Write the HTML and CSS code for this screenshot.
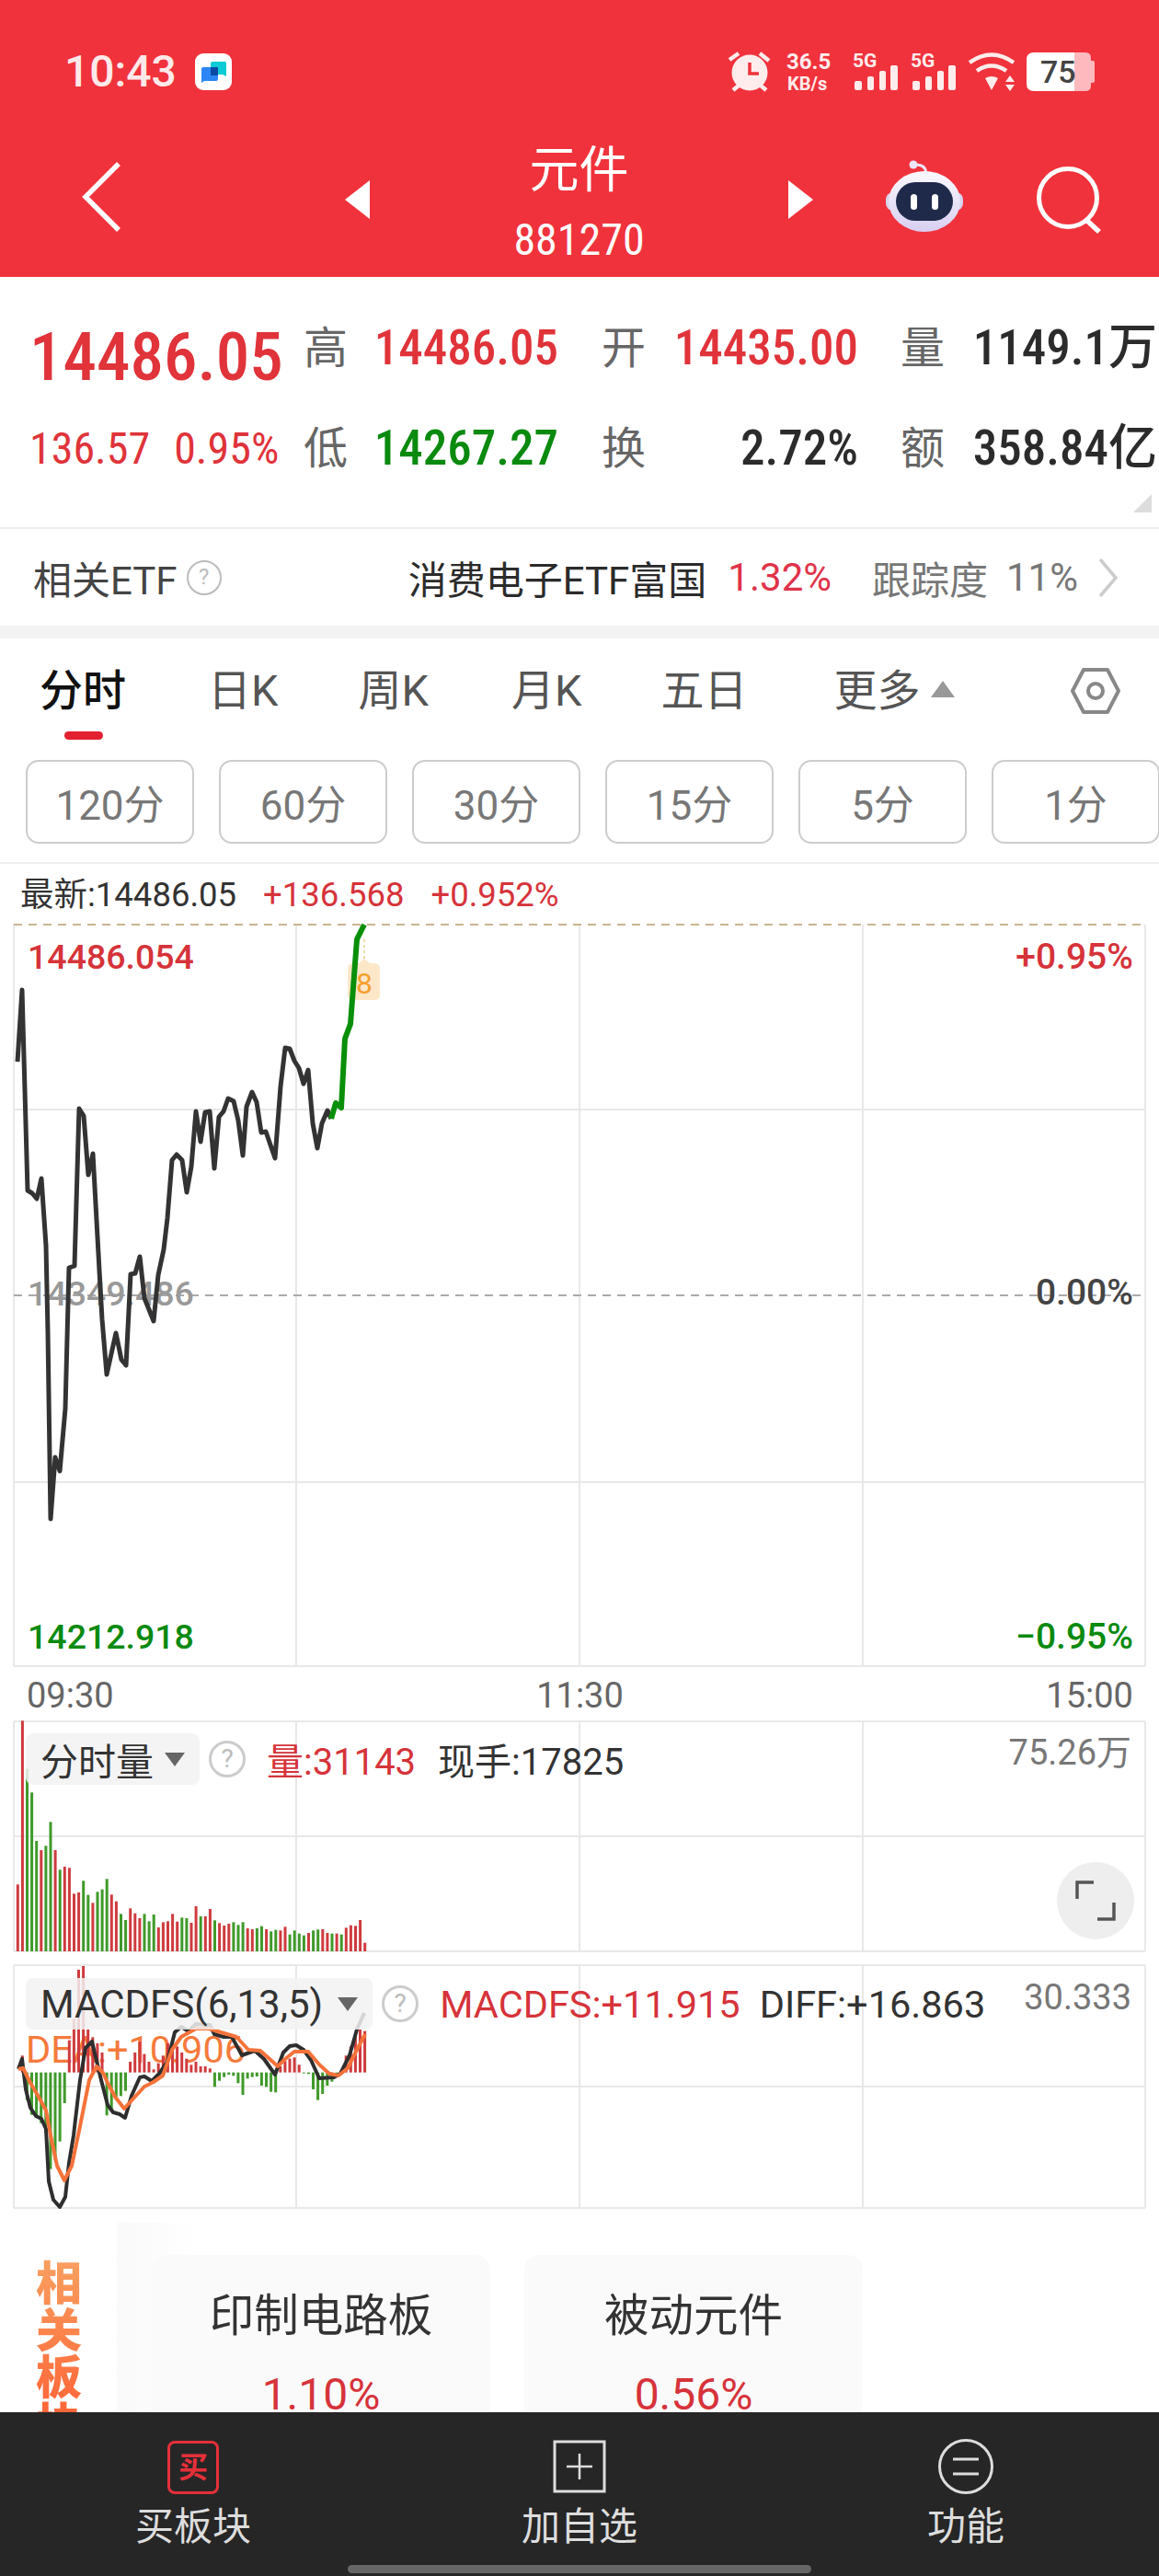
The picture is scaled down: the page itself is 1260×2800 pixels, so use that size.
FILE: index.html
```html
<!DOCTYPE html>
<html lang="zh-CN">
<head>
<meta charset="utf-8">
<title>元件 881270</title>
<link rel="stylesheet" href="styles.css">
</head>
<body>
<div class="phone">
  <header class="header">
    <div class="status">
      <div class="status-left">
        <span class="time">10:43</span>
        <svg class="appicon" viewBox="210 58 40 40">
          <rect x="210" y="58" width="40" height="40" rx="9" fill="#fff"/>
          <path d="M227 69q0-2 2-2h14q1 0 1 2v14l-4-2h-13z" fill="#0ccbd6"/>
          <path d="M217 75q0-2 2-2h14q2 0 2 2v11q0 2-2 2h-13l-3 2z" fill="#2c86f5"/>
          <rect x="227" y="73" width="8" height="9" fill="#0b4aa3"/>
        </svg>
      </div>
      <svg class="sysicons" viewBox="790 55 402 46">
        <g class="ic-line"><path d="M793 65l10-7M826 58l10 8M797 98l6-5M833 98l-6-5"/></g>
        <circle cx="815" cy="79" r="19.5" class="ic-fill"/>
        <path d="M815 68v12h10" fill="none" stroke="#f0323c" stroke-width="3.5"/>
        <text x="855" y="75" class="sys-a">36.5</text>
        <text x="856" y="98" class="sys-b">KB/s</text>
        <text x="927" y="73" class="sys-c">5G</text>
        <g class="ic-fill"><rect x="929" y="88" width="8" height="10" rx="2"/><rect x="943" y="83" width="7" height="15" rx="2"/><rect x="956" y="77" width="7" height="21" rx="2"/><rect x="968" y="71" width="8" height="27" rx="2"/></g>
        <text x="990" y="73" class="sys-c">5G</text>
        <g class="ic-fill"><rect x="992" y="88" width="8" height="10" rx="2"/><rect x="1006" y="83" width="7" height="15" rx="2"/><rect x="1019" y="77" width="7" height="21" rx="2"/><rect x="1031" y="71" width="8" height="27" rx="2"/></g>
        <g class="ic-line"><path d="M1054 68q24-17 48 0M1062 77q16-11 32 0" fill="none"/></g>
        <path d="M1071 85q7-4 14 0l-7 13zM1093 89h10l-5-7zM1093 92h10l-5 7z" class="ic-fill"/>
        <path d="M1116 65q0-8 8-8h44v42h-44q-8 0-8-8z" fill="#fff"/>
        <path d="M1168 57h12q6 0 6 6v3h2q2 0 2 2v20q0 2-2 2h-2v3q0 6-6 6h-12z" fill="#fdb9bd"/>
        <text x="1131" y="90" class="sys-bat">75</text>
      </svg>
    </div>
    <nav class="nav">
      <svg class="back" viewBox="0 0 50 80"><path d="M44 4L8 40l36 36" fill="none" stroke="#fff" stroke-width="5.5"/></svg>
      <div class="nav-center">
        <svg class="tri" viewBox="0 0 27 42"><path d="M27 0v42L0 21z" fill="#fff"/></svg>
        <div class="title"><div class="title-name">元件</div><div class="title-code">881270</div></div>
        <svg class="tri" viewBox="0 0 27 42"><path d="M0 0v42l27-21z" fill="#fff"/></svg>
      </div>
      <svg class="robot" viewBox="960 172 90 84">
        <defs><linearGradient id="robot-shell" x1="0" y1="0" x2="0" y2="1"><stop offset="0" stop-color="#fbf9ff"/><stop offset="1" stop-color="#d8cff0"/></linearGradient></defs>
        <path d="M994 179q12-1 13 9" fill="none" stroke="#ece6f7" stroke-width="3"/>
        <circle cx="993" cy="179" r="4.5" fill="#ece6f7"/>
        <rect x="963" y="209" width="84" height="20" rx="8" fill="#d9d3ee"/>
        <ellipse cx="1005" cy="219" rx="39" ry="33" fill="url(#robot-shell)"/>
        <rect x="974" y="198" width="62" height="42" rx="21" fill="#1f2a4b"/>
        <rect x="990" y="211" width="7" height="17" rx="3.5" fill="#fff"/>
        <rect x="1013" y="211" width="7" height="17" rx="3.5" fill="#fff"/>
      </svg>
      <svg class="search" viewBox="1125 180 75 75"><circle cx="1161" cy="215" r="31.5" fill="none" stroke="#fff" stroke-width="5"/><path d="M1182 240l13 12" stroke="#fff" stroke-width="5.5"/></svg>
    </nav>
  </header>

  <section class="stats">
    <div class="stats-grid">
      <div class="big red">14486.05</div>
      <div class="lab">高</div><div class="val red">14486.05</div>
      <div class="lab lab-pad">开</div><div class="val red">14435.00</div>
      <div class="lab lab-pad2">量</div><div class="val dark">1149.1万</div>
      <div class="change red"><span>136.57</span><span>0.95%</span></div>
      <div class="lab">低</div><div class="val green">14267.27</div>
      <div class="lab lab-pad">换</div><div class="val dark">2.72%</div>
      <div class="lab lab-pad2">额</div><div class="val dark">358.84亿</div>
    </div>
    <svg class="corner" viewBox="0 0 20 20"><path d="M20 0v20H0z" fill="#ddd"/></svg>
  </section>

  <section class="etf">
    <div class="etf-left"><span>相关ETF</span><span class="qmark qmark-s">?</span></div>
    <div class="etf-right">
      <span class="etf-name">消费电子ETF富国</span>
      <span class="etf-pct">1.32%</span>
      <span class="etf-lab">跟踪度</span>
      <span class="etf-track">11%</span>
      <svg class="etf-chev" viewBox="0 0 22 42"><path d="M2 1l17 20L2 41" fill="none" stroke="#ccc" stroke-width="3.5"/></svg>
    </div>
  </section>
  <div class="band"></div>

  <section class="tabs">
    <span class="tab tab-on">分时</span>
    <span class="tab tab-d">日K</span>
    <span class="tab tab-w">周K</span>
    <span class="tab tab-m">月K</span>
    <span class="tab tab-5">五日</span>
    <span class="tab tab-more">更多<i class="tab-tri"></i></span>
    <svg class="hex" viewBox="0 0 54 54"><path d="M14 4h26l12 23-12 23H14L2 27z" fill="none" stroke="#888" stroke-width="4" stroke-linejoin="round"/><circle cx="27" cy="27" r="8" fill="none" stroke="#888" stroke-width="4"/></svg>
  </section>

  <section class="periods">
    <span class="period">120分</span><span class="period">60分</span><span class="period">30分</span><span class="period">15分</span><span class="period">5分</span><span class="period">1分</span>
  </section>

  <section class="quote">
    <span class="q-dark">最新:14486.05</span><span class="q-red">+136.568</span><span class="q-red">+0.952%</span>
  </section>

  <section class="chart chart-main">
    <svg class="canvas" viewBox="0 1000 1260 812">
      <g class="grid">
        <path d="M15 1004V1810M322 1004V1810M630 1004V1810M938 1004V1810M1245 1004V1810M15 1810H1245M15 1205H1245M15 1610H1245"/>
      </g>
      <path d="M15 1004H1245" class="dash-tan"/>
      <path d="M15 1407H1245" class="dash-gray"/>
      <path d="M396 1020v22" class="dash-tag"/>
      <path d="M384 1046h6l6-5 6 5h5q6 0 6 6v28q0 6-6 6h-23q-6 0-6-6v-28q0-6 6-6z" fill="#fde7c9"/>
      <text x="396" y="1079" class="tag-8">8</text>
      <text x="30" y="1418" class="lbl lbl-gray">14349.486</text>
      <polyline class="price" points="19,1153 24,1075 30,1293 35,1296 40,1302 45,1280 50,1353 52,1447 55,1650 60,1583 65,1598 71,1530 75,1377 81,1375 86,1204 91,1212 96,1276 101,1253 108,1380 111,1433 116,1493 126,1448 132,1477 137,1483 142,1384 147,1383 152,1365 157,1410 167,1435 172,1385 178,1357 182,1323 187,1260 192,1254 198,1260 203,1295 208,1267 213,1207 218,1240 223,1208 228,1207 233,1269 238,1213 243,1207 248,1193 254,1196 259,1217 264,1255 268,1202 274,1186 279,1197 284,1230 289,1229 299,1258 305,1180 310,1138 315,1139 320,1152 325,1160 330,1177 335,1162 340,1220 345,1247 350,1220 356,1206 360,1215"/>
      <polyline class="price-up" points="360,1215 365,1198 371,1203 375,1128 381,1112 388,1020 396,1004"/>
      <text x="30" y="1052" class="lbl lbl-red">14486.054</text>
      <text x="30" y="1791" class="lbl lbl-green">14212.918</text>
      <text x="1232" y="1052" class="lbl lbl-r lbl-red end">+0.95%</text>
      <text x="1232" y="1417" class="lbl lbl-r lbl-dark end">0.00%</text>
      <text x="1232" y="1791" class="lbl lbl-r lbl-green end">−0.95%</text>
    </svg>
  </section>

  <section class="times"><span>09:30</span><span>11:30</span><span>15:00</span></section>

  <section class="chart chart-vol">
    <svg class="canvas" viewBox="0 1868 1260 254">
      <path class="grid" d="M15 1870V2120M322 1870V2120M630 1870V2120M938 1870V2120M1245 1870V2120M15 1870H1245M15 1995H1245M15 2120H1245"/>
      <g id="vol-bars"></g>
    </svg>
    <div class="legend">
      <div class="pill"><span>分时量</span><i class="pill-tri"></i></div>
      <span class="qmark">?</span>
      <span class="leg-red">量:31143</span>
      <span class="leg-dark">现手:17825</span>
    </div>
    <span class="scale">75.26万</span>
    <div class="fullscreen">
      <svg viewBox="0 0 44 44"><path d="M2 20V2h18M42 24v18H24" fill="none" stroke="#555" stroke-width="3.5"/></svg>
    </div>
  </section>

  <section class="chart chart-macd">
    <svg class="canvas" viewBox="0 2133 1260 268">
      <path class="grid" d="M15 2135V2399M322 2135V2399M630 2135V2399M938 2135V2399M1245 2135V2399M15 2135H1245M15 2267H1245M15 2399H1245"/>
      <text x="28" y="2241" class="dea">DEA:+10.906</text>
      <g id="macd-bars"></g>
      <polyline class="diff" points="20,2248 24,2237 28,2270 33,2290 39,2299 45,2302 50,2313 53,2370 58,2390 65,2398 71,2387 75,2350 80,2320 87,2260 93,2225 100,2218 110,2260 117,2287 123,2295 130,2297 136,2301 143,2277 152,2257 157,2256 165,2261 173,2253 182,2240 190,2208 197,2202 205,2207 213,2199 228,2200 233,2210 243,2213 252,2213 263,2233 277,2228 287,2237 299,2254 308,2230 315,2223 322,2222 330,2227 338,2238 347,2258 363,2257 370,2253 380,2233 388,2205 396,2187"/>
      <polyline class="dea-line" points="20,2248 25,2247 33,2263 43,2280 50,2293 55,2320 62,2353 70,2369 78,2353 87,2310 97,2260 105,2245 112,2252 117,2263 125,2278 135,2291 145,2280 157,2267 167,2262 177,2255 187,2227 197,2213 213,2204 227,2204 240,2208 257,2213 270,2227 283,2228 302,2245 310,2237 320,2229 335,2229 347,2243 358,2253 368,2255 378,2247 388,2227 397,2210"/>
    </svg>
    <div class="legend legend-macd">
      <div class="pill pill-macd"><span>MACDFS(6,13,5)</span><i class="pill-tri"></i></div>
      <span class="qmark">?</span>
      <span class="leg-red leg-macd">MACDFS:+11.915</span>
      <span class="leg-dark leg-macd leg-diff">DIFF:+16.863</span>
    </div>
    <span class="scale scale-macd">30.333</span>
  </section>

  <section class="related">
    <div class="rel-title">相关板块</div>
    <div class="rel-shade"></div>
    <div class="rel-card"><div class="rel-name">印制电路板</div><div class="rel-pct">1.10%</div></div>
    <div class="rel-card"><div class="rel-name">被动元件</div><div class="rel-pct">0.56%</div></div>
  </section>

  <footer class="bottom">
    <div class="action">
      <span class="buy-icon">买</span>
      <span class="action-label">买板块</span>
    </div>
    <div class="action">
      <svg class="action-icon" viewBox="0 0 60 60"><rect x="3" y="3" width="54" height="54" fill="none" stroke="#ddd" stroke-width="3"/><path d="M30 16v28M16 30h28" stroke="#ddd" stroke-width="2.5"/></svg>
      <span class="action-label">加自选</span>
    </div>
    <div class="action">
      <svg class="action-icon" viewBox="0 0 60 60"><circle cx="30" cy="30" r="28.5" fill="none" stroke="#ddd" stroke-width="3"/><path d="M16 22h28M16 38h28" stroke="#ddd" stroke-width="3"/></svg>
      <span class="action-label">功能</span>
    </div>
    <div class="home-bar"></div>
  </footer>
</div>
<script src="chart.js"></script>
</body>
</html>
```
FILE: styles.css
```css
* { box-sizing: border-box; }
html, body { margin: 0; padding: 0; background: #fff; }
body { font-family: Roboto, "Noto Sans CJK SC", sans-serif; color: #333; }
.phone { width: 1260px; height: 2800px; overflow: hidden; position: relative; }

/* header */
.header { height: 301px; background: #f0323c; color: #fff; }
.status { height: 130px; padding: 55px 68px 0 70px; display: flex; justify-content: space-between; align-items: flex-start; }
.status-left { display: flex; align-items: center; gap: 20px; height: 46px; }
.time { font-size: 48px; font-weight: 500; color: #ffe9ea; line-height: 46px; }
.appicon { width: 40px; height: 40px; }
.sysicons { width: 402px; height: 46px; }
.ic-fill { fill: #ffecec; }
.ic-line { fill: none; stroke: #ffecec; stroke-width: 4.5; }
.sys-a { font: 700 24px Roboto, sans-serif; fill: #ffecec; }
.sys-b { font: 700 20px Roboto, sans-serif; fill: #ffecec; }
.sys-c { font: 700 21px Roboto, sans-serif; fill: #ffecec; }
.sys-bat { font: 500 34px Roboto, sans-serif; fill: #444; }
.nav { height: 171px; position: relative; display: flex; align-items: flex-start; }
.back { width: 50px; height: 80px; margin: 44px 0 0 85px; }
.nav-center { position: absolute; left: 375px; top: 26px; width: 509px; display: flex; justify-content: space-between; align-items: flex-start; }
.tri { width: 27px; height: 42px; margin-top: 40px; }
.title { text-align: center; }
.title-name { font-size: 54px; line-height: 60px; }
.title-code { font-size: 48px; font-stretch: 82%; line-height: 54px; margin-top: 18px; }
.robot { width: 90px; height: 84px; position: absolute; left: 960px; top: 42px; }
.search { width: 75px; height: 75px; position: absolute; left: 1125px; top: 50px; }

/* stats */
.stats { height: 274px; position: relative; border-bottom: 2px solid #eee; padding-top: 23px; }
.stats-grid { display: grid; grid-template-columns: 330px 46px 231px 93px 233px 95px 230px; grid-auto-rows: 109px; align-items: center; }
.red { color: #e0333a; }
.green { color: #0a8a0f; }
.dark { color: #2b2b2b; }
.big { font-size: 73px; font-stretch: 85%; font-weight: 500; padding-left: 32px; line-height: 109px; margin-top: 20px; white-space: nowrap; }
.lab { font-size: 48px; color: #666; line-height: 109px; }
.lab-pad { padding-left: 47px; }
.lab-pad2 { padding-left: 46px; }
.val { font-size: 53px; font-stretch: 86%; text-align: right; font-weight: 500; line-height: 109px; white-space: nowrap; }
.change { display: flex; gap: 26px; padding-left: 32px; font-size: 48px; font-stretch: 81%; }
.corner { position: absolute; right: 8px; bottom: 16px; width: 20px; height: 20px; }

/* etf */
.etf { height: 105px; padding: 0 44px 0 36px; display: flex; justify-content: space-between; align-items: center; font-size: 42px; }
.etf-left { display: flex; align-items: center; gap: 10px; color: #444; }
.etf-right { display: flex; align-items: center; }
.etf-name { color: #2b2b2b; }
.etf-pct { color: #e0334a; margin-left: 23px; }
.etf-lab { color: #777; margin-left: 44px; }
.etf-track { color: #777; margin-left: 20px; }
.etf-chev { width: 22px; height: 42px; margin-left: 22px; }
.qmark { width: 38px; height: 38px; border: 2.5px solid #bbb; border-radius: 50%; color: #bbb; font: 24px/33px Roboto, sans-serif; text-align: center; display: inline-block; flex: none; }
.band { height: 14px; background: #f4f4f4; }

/* tabs */
.tabs { height: 125px; padding: 30px 0 0 43px; display: flex; align-items: flex-start; position: relative; font-size: 47px; color: #555; }
.tab { line-height: 54px; position: relative; white-space: nowrap; }
.tab-on { color: #111; font-weight: 500; margin-right: 89px; }
.tab-on::after { content: ""; position: absolute; left: 27px; top: 71px; width: 42px; height: 9px; border-radius: 5px; background: #e3202f; }
.tab-d { margin-right: 87px; }
.tab-w { margin-right: 90px; }
.tab-m { margin-right: 86px; }
.tab-5 { margin-right: 94px; }
.tab-tri { display: inline-block; margin-left: 11px; vertical-align: 9px; border: 13px solid transparent; border-top: 0; border-bottom: 18px solid #999; }
.hex { position: absolute; left: 1164px; top: 30px; width: 54px; height: 54px; }

/* periods */
.periods { height: 120px; padding: 7px 0 0 28px; display: flex; gap: 27px; border-bottom: 2px solid #eee; overflow: hidden; }
.period { flex: none; width: 183px; height: 91px; border: 2px solid #ccc; border-radius: 14px; font-size: 44px; color: #777; display: flex; align-items: center; justify-content: center; }

/* quote */
.quote { height: 66px; padding: 12px 0 0 22px; font-size: 36.5px; line-height: 44px; display: flex; gap: 29px; white-space: nowrap; }
.q-dark { color: #333; }
.q-red { color: #d6333a; }

/* charts */
.chart { position: relative; }
.canvas { position: absolute; left: 0; top: 0; width: 1260px; display: block; }
.chart-main { height: 806px; margin-top: -4px; padding-top: 4px; box-sizing: content-box; }
.chart-main .canvas { height: 812px; }
.grid { fill: none; stroke: #e8e8e8; stroke-width: 2; }
.dash-tan { stroke: #c9b48f; stroke-width: 2; stroke-dasharray: 9 7; fill: none; }
.dash-gray { stroke: #aaa; stroke-width: 2; stroke-dasharray: 9 7; fill: none; }
.dash-tag { stroke: #e9dca6; stroke-width: 2; stroke-dasharray: 3 3; fill: none; }
.tag-8 { font: 32px Roboto, sans-serif; fill: #f5a030; text-anchor: middle; }
.price { fill: none; stroke: #333; stroke-width: 5; stroke-linejoin: round; }
.price-up { fill: none; stroke: #0a8f0a; stroke-width: 6; stroke-linejoin: round; }
.lbl { font: 500 37.5px Roboto, sans-serif; }
.lbl-r { font-size: 39px; }
.lbl-red { fill: #d6333a; }
.lbl-green { fill: #0a8a0f; }
.lbl-gray { fill: #999; }
.lbl-dark { fill: #444; }
.end { text-anchor: end; }
.times { height: 60px; padding: 10px 28px 0 29px; display: flex; justify-content: space-between; font-size: 38px; line-height: 44px; color: #666; }
.chart-vol { height: 265px; margin-top: -2px; }
.chart-vol .canvas { height: 254px; }
.legend { position: absolute; left: 28px; top: 15px; height: 56px; display: flex; align-items: center; font-size: 40px; white-space: nowrap; }
.pill { height: 56px; padding: 0 16px; display: flex; align-items: center; gap: 12px; background: rgba(242,242,242,.85); border-radius: 8px; color: #333; font-size: 41px; }
.pill-tri { display: block; border: 11px solid transparent; border-bottom: 0; border-top: 15px solid #666; }
.legend .qmark { margin-left: 10px; width: 40px; height: 40px; border-width: 3px; border-color: #ccc; color: #bbb; line-height: 34px; font-size: 28px; }
.leg-red { color: #d6333a; margin-left: 23px; }
.leg-dark { color: #333; margin-left: 24px; }
.leg-macd { font-size: 41.5px; }
.leg-diff { margin-left: 21px; }
.scale { position: absolute; right: 30px; top: 14px; font-size: 38px; line-height: 44px; color: #777; }
.fullscreen { position: absolute; left: 1149px; top: 155px; width: 84px; height: 84px; border-radius: 50%; background: #eee; display: flex; align-items: center; justify-content: center; }
.fullscreen svg { width: 44px; height: 44px; }
.chart-macd { height: 267px; }
.chart-macd .canvas { height: 268px; }
.legend-macd { top: 16px; }
.pill-macd { gap: 16px; font-size: 42px; }
.scale-macd { top: 15px; }
.dea { font: 41.5px Roboto, sans-serif; fill: #f57a3c; }
.diff { fill: none; stroke: #2e2e2e; stroke-width: 4; stroke-linejoin: round; }
.dea-line { fill: none; stroke: #f5723a; stroke-width: 4; stroke-linejoin: round; }

/* related */
.related { height: 221px; position: relative; overflow: hidden; display: flex; gap: 37px; padding: 50px 0 0 165px; }
.rel-title { position: absolute; left: 39px; top: 52px; width: 50px; font-size: 50px; line-height: 51px; font-weight: 900; font-family: "Noto Sans CJK SC", sans-serif; background: linear-gradient(180deg, #f9a060, #ff5a30); -webkit-background-clip: text; background-clip: text; color: transparent; }
.rel-shade { position: absolute; left: 127px; top: 15px; width: 90px; height: 206px; background: linear-gradient(90deg, #f9f9f9, #fff); }
.rel-card { position: relative; width: 368px; height: 260px; border-radius: 16px; background: #fafafa; text-align: center; }
.rel-name { font-size: 48.5px; line-height: 60px; color: #333; margin-top: 37px; }
.rel-pct { font-size: 48px; font-stretch: 90%; line-height: 56px; color: #d6333a; margin-top: 27px; }

/* bottom */
.bottom { height: 179px; background: #262626; display: grid; grid-template-columns: 420px 420px 420px; position: relative; padding-top: 29px; }
.action { display: flex; flex-direction: column; align-items: center; }
.action-icon { width: 60px; height: 60px; }
.buy-icon { width: 56px; height: 58px; border: 3px solid #e5303a; border-radius: 8px; color: #e5303a; font-size: 32px; font-weight: 700; line-height: 52px; text-align: center; margin-top: 2px; }
.action-label { font-size: 42px; line-height: 48px; color: #ddd; margin-top: 12px; }
.home-bar { position: absolute; left: 378px; top: 166px; width: 504px; height: 9px; background: #666; border-radius: 5px; }
```
FILE: chart.js
```js
// Bars are a colour letter and the far end of the bar, in the chart's reading units.
var SVG = 'http://www.w3.org/2000/svg';
function addBar(group, x, y1, y2, kind) {
  var bar = document.createElementNS(SVG, 'rect');
  bar.setAttribute('x', x);
  bar.setAttribute('y', Math.min(y1, y2));
  bar.setAttribute('width', 3);
  bar.setAttribute('height', Math.abs(y2 - y1));
  bar.setAttribute('fill', kind === 'r' ? '#cf3b3e' : '#3f9a2a');
  group.appendChild(bar);
}

var vol = 'r562 r28 g185 g262 g420 r450 g436 g358 r450 g514 r504 r508 r592 r588 g550 g596 r622 g586 g578 g544 r595 r617 g658 g678 r640 r656 r672 g658 g682 g660 r702 r685 r682 r658 r683 g670 g672 r687 r633 g666 r666 r642 g679 r688 r696 r690 g685 g694 g685 r705 r708 g705 g698 r708 g715 g710 r712 r700 g725 g712 g722 g728 r720 g712 g709 r708 r720 g722 r722 g725 r703 r695 r697 r678 r752'.split(' ');
var volGroup = document.getElementById('vol-bars');
vol.forEach(function (v, i) {
  addBar(volGroup, 17.8 + i * 5.1, 1860 + Number(v.slice(1)) / 3, 2120, v[0]);
});

var macd = 'r310 g455 g503 g505 g530 g560 g680 g650 g590 g465 r260 r190 r30 r18 r225 r250 r270 r300 g505 g490 g455 g442 g425 r330 r300 r265 r305 r330 r355 r335 r310 r270 r290 r280 r300 r320 r340 r330 r345 r345 r352 g412 g392 g380 g372 g376 g400 g438 g385 g380 g378 g408 g412 g428 g430 r345 r328 r320 r316 r340 g368 g370 g420 g455 g435 g408 g395 g375 r360 r310 r280 r245 r225 r230'.split(' ');
var macdGroup = document.getElementById('macd-bars');
macd.forEach(function (v, i) {
  addBar(macdGroup, 22.8 + i * 5.1, 2130 + Number(v.slice(1)) / 3, 2130 + 365 / 3, v[0]);
});
```
